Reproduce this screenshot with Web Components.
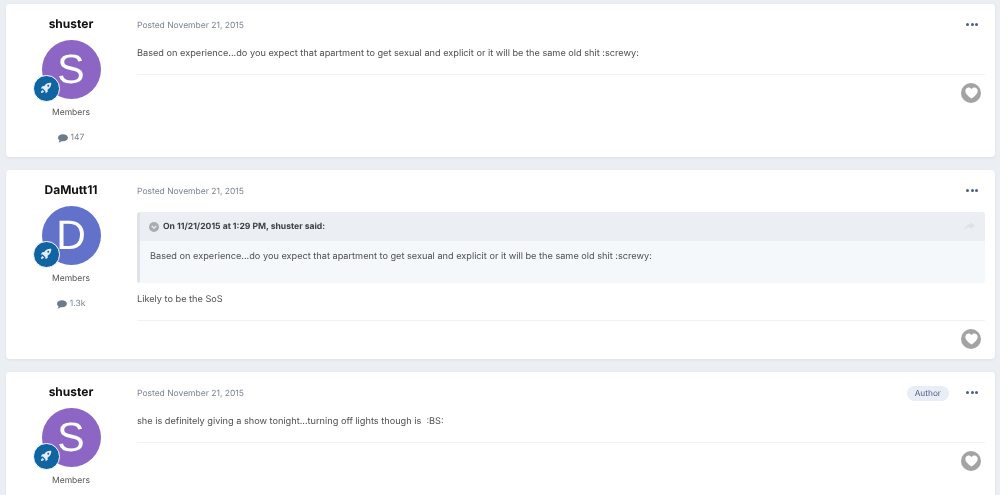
<!DOCTYPE html>
<html>
<head>
<meta charset="utf-8">
<title>Posts</title>
<style>
  html, body { margin: 0; padding: 0; height: 495px; overflow: hidden; }
  body { background: #ebeef3; font-family: Inter, "Liberation Sans", sans-serif; color: #4f4f4f; text-rendering: geometricPrecision; }
  post-list { padding: 4px 5px 0 6px; filter: blur(.3px); }
</style>
</head>
<body>
<template id="user-tpl">
  <style>
    :host { display: flex; flex-direction: column; align-items: center; box-sizing: border-box; width: 131px; flex: none; padding-right: 1px; }
    .name { font-size: 12px; font-weight: 700; line-height: 16px; color: #111; margin-top: 12px; }
    .photo { position: relative; width: 59px; height: 60px; margin-top: 8px; }
    .avatar { width: 59px; height: 59px; border-radius: 50%; color: #fff; font: 400 41px/59px "Liberation Sans", sans-serif; text-align: center; }
    .badge { position: absolute; left: -7.500px; top: 36px; width: 24.500px; height: 24.500px; box-sizing: content-box; border: 1px solid #fff; border-radius: 50%; background: #0f64a1; display: flex; align-items: center; justify-content: center; margin: -1px; }
    .group { font-size: 8.5px; line-height: 12px; margin-top: 7px; color: #555; }
    .count { font-size: 8.5px; line-height: 12px; margin-top: 13px; color: #7b8494; display: flex; align-items: center; gap: 3px; }
    .count[hidden] { display: none; }
  </style>
  <div class="name"></div>
  <div class="photo">
    <div class="avatar"></div>
    <div class="badge">
      <svg width="12" height="12" viewBox="0 0 16 16"><path fill="#e4ecf3" d="M15 1c-4-.4-7 1-9.3 4.300L3 5.600 1 8.500l2.800.3 3.400 3.400.3 2.800 2.900-2-.3-2.700C13.500 8 15.400 5 15 1zM11 6.300a1.300 1.300 0 1 1 0-2.600 1.300 1.300 0 0 1 0 2.600zM3.200 10.600c-1 .5-1.700 1.700-2 4.200 2.500-.3 3.700-1 4.200-2z"/></svg>
    </div>
  </div>
  <div class="group">Members</div>
  <div class="count">
    <svg width="10" height="9" viewBox="0 0 12 10"><path fill="#6d7b8d" d="M6 0C2.700 0 0 1.800 0 4.200c0 1.200.7 2.300 1.800 3-.1.900-.6 1.900-1.200 2.500 1.300-.1 2.600-.6 3.400-1.500.6.100 1.300.2 2 .2 3.300 0 6-1.900 6-4.200S9.300 0 6 0z"/></svg>
    <span class="num"></span>
  </div>
</template>

<template id="post-tpl">
  <style>
    :host { display: flex; background: #fff; border-radius: 4px; box-shadow: 0 1px 3px rgba(60,70,90,.08); margin-bottom: 13px; height: var(--h, auto); }
    .main { flex: 1; min-width: 0; padding-right: 10px; display: flex; flex-direction: column; }
    .head { display: flex; align-items: center; height: 42px; flex: none; }
    .date { font-size: 8.5px; color: #7b8494; flex: 1; padding-top: 2px; }
    .author { font-size: 8.3px; line-height: 14px; padding: 1px 8px 0; background: #e9edf5; color: #4d6186; border-radius: 8px; margin-right: 17px; margin-top: 1px; }
    .more { display: flex; gap: 1.500px; margin: 0 7px 1px 0; }
    .more i { width: 3px; height: 3px; border-radius: 50%; background: #4d5e7c; }
    .body { font-size: 9.18px; line-height: 15px; color: #4f4f4f; }
    ::slotted(p) { margin: 0; }
    .foot { margin-top: 13px; border-top: 1px solid #f0f1f4; display: flex; justify-content: flex-end; padding: 8px 4px 0 0; }
    .like { width: 20px; height: 20px; border-radius: 50%; background: #a3a3a3; display: flex; align-items: center; justify-content: center; }
  </style>
  <slot name="user"></slot>
  <div class="main">
    <div class="head">
      <div class="date">Posted November 21, 2015</div>
      <div class="author" hidden>Author</div>
      <div class="more"><i></i><i></i><i></i></div>
    </div>
    <div class="body"><slot></slot></div>
    <div class="foot">
      <div class="like"><svg width="13" height="12" viewBox="0 0 14 13"><path fill="#fff" d="M7 12.500C3 9.500.3 7.300.3 4.200.3 2 2 .5 3.900.5 5.200.5 6.300 1.200 7 2.300 7.700 1.200 8.800.5 10.100.5 12 .5 13.700 2 13.700 4.200c0 3.100-2.700 5.300-6.700 8.300z"/></svg></div>
    </div>
  </div>
</template>

<template id="quote-tpl">
  <style>
    :host { display: block; border-left: 3px solid #dfe3e9; border-radius: 3px; background: #f5f8fb; margin-bottom: 9px; }
    .top { display: flex; align-items: center; gap: 4px; height: 29px; background: #ebeff3; padding: 0 10px 0 9px; font-size: 8.6px; font-weight: 700; color: #3b3f46; border-radius: 0 3px 0 0; }
    .top span { flex: 1; padding-top: 2px; }
    .content { padding: 8px 10px 19px; font-size: 9.18px; line-height: 15px; color: #4f4f4f; }
  </style>
  <div class="top">
    <svg width="10" height="10" viewBox="0 0 10 10"><circle cx="5" cy="5" r="5" fill="#a9adb3"/><path d="M2.800 4l2.200 2.200L7.200 4" fill="none" stroke="#ebeff3" stroke-width="1.300"/></svg>
    <span></span>
    <svg width="11" height="9" viewBox="0 0 12 10"><path fill="#dde2e8" d="M7 0l5 4-5 4V5.500C4 5.500 2 6.500.5 9.500.8 5.500 3 2.800 7 2.500z"/></svg>
  </div>
  <div class="content"><slot></slot></div>
</template>

<post-list>
  <forum-post style="--h:153px">
    <post-user slot="user" name="shuster" letter="S" color="#8c65c5" count="147"></post-user>
    <p>Based on experience...do you expect that apartment to get sexual and explicit or it will be the same old shit :screwy:</p>
  </forum-post>
  <forum-post style="--h:189px">
    <post-user slot="user" name="DaMutt11" letter="D" color="#6272ca" count="1.3k"></post-user>
    <post-quote cite="On 11/21/2015 at 1:29 PM, shuster said:">Based on experience...do you expect that apartment to get sexual and explicit or it will be the same old shit :screwy:</post-quote>
    <p>Likely to be the SoS</p>
  </forum-post>
  <forum-post author style="--h:135px">
    <post-user slot="user" name="shuster" letter="S" color="#8c65c5"></post-user>
    <p>she is definitely giving a show tonight...turning off lights though is &nbsp;:BS:</p>
  </forum-post>
</post-list>

<script>
'use strict';

function stamp(host, id) {
  const shadow = host.attachShadow({mode: 'open'});
  shadow.appendChild(document.getElementById(id).content.cloneNode(true));
  return shadow;
}

class PostList extends HTMLElement {
  constructor() {
    super();
    this.attachShadow({mode: 'open'}).innerHTML = '<style>:host{display:block}</style><slot></slot>';
  }
}

class PostUser extends HTMLElement {
  constructor() {
    super();
    stamp(this, 'user-tpl');
  }
  connectedCallback() {
    const root = this.shadowRoot;
    root.querySelector('.name').textContent = this.getAttribute('name');
    const av = root.querySelector('.avatar');
    av.textContent = this.getAttribute('letter');
    av.style.background = this.getAttribute('color');
    // the last post runs off the window, its count isn't in view
    root.querySelector('.count').hidden = !this.hasAttribute('count');
    root.querySelector('.num').textContent = this.getAttribute('count');
  }
}

class ForumPost extends HTMLElement {
  constructor() {
    super();
    stamp(this, 'post-tpl');
  }
  connectedCallback() {
    // only the topic starter gets the pill
    this.shadowRoot.querySelector('.author').hidden = !this.hasAttribute('author');
  }
}

class PostQuote extends HTMLElement {
  constructor() {
    super();
    stamp(this, 'quote-tpl');
  }
  connectedCallback() {
    this.shadowRoot.querySelector('.top span').textContent = this.getAttribute('cite');
  }
}

customElements.define('post-list', PostList);
customElements.define('post-user', PostUser);
customElements.define('forum-post', ForumPost);
customElements.define('post-quote', PostQuote);
</script>
</body>
</html>
